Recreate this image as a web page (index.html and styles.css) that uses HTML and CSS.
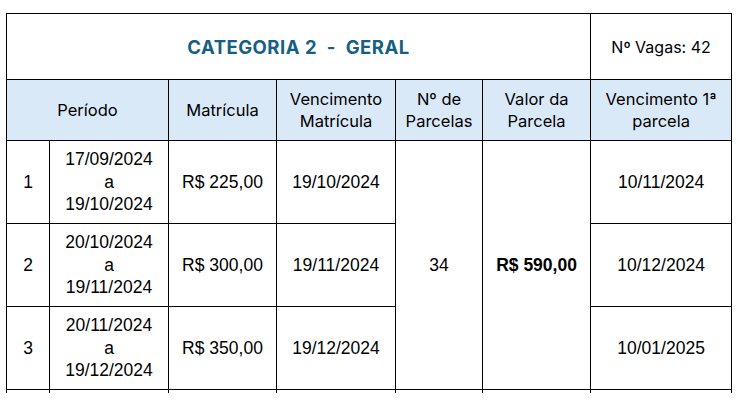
FILE: index.html
```html
<!DOCTYPE html>
<html lang="pt-BR">
<head>
<meta charset="utf-8">
<title>Categoria 2 - Geral</title>
<link rel="stylesheet" href="styles.css">
</head>
<body>
<div class="frame">
<table class="grid">
  <colgroup>
    <col class="c1"><col class="c2"><col class="c3"><col class="c4"><col class="c5"><col class="c6"><col class="c7">
  </colgroup>
  <tr class="r-title">
    <td colspan="6" class="title">CATEGORIA 2&nbsp; - &nbsp;GERAL</td>
    <td class="vagas">Nº Vagas: 42</td>
  </tr>
  <tr class="r-head">
    <th colspan="2">Período</th>
    <th>Matrícula</th>
    <th>Vencimento<br>Matrícula</th>
    <th>Nº de<br>Parcelas</th>
    <th>Valor da<br>Parcela</th>
    <th>Vencimento 1ª<br>parcela</th>
  </tr>
  <tr class="r-body">
    <td>1</td>
    <td>17/09/2024<br>a<br>19/10/2024</td>
    <td>R$ 225,00</td>
    <td>19/10/2024</td>
    <td rowspan="3">34</td>
    <td rowspan="3" class="strong">R$ 590,00</td>
    <td>10/11/2024</td>
  </tr>
  <tr class="r-body">
    <td>2</td>
    <td>20/10/2024<br>a<br>19/11/2024</td>
    <td>R$ 300,00</td>
    <td>19/11/2024</td>
    <td>10/12/2024</td>
  </tr>
  <tr class="r-body">
    <td>3</td>
    <td>20/11/2024<br>a<br>19/12/2024</td>
    <td>R$ 350,00</td>
    <td>19/12/2024</td>
    <td>10/01/2025</td>
  </tr>
  <tr class="r-next">
    <td></td><td></td><td></td><td></td><td></td><td></td><td></td>
  </tr>
</table>
</div>
</body>
</html>
```

FILE: styles.css
```css
html, body {
  margin: 0;
  padding: 0;
  background: #ffffff;
}
body {
  padding: 13px 0 0 6px;
}
.frame {
  height: 380px;
  overflow: hidden;
  width: 730px;
}
.grid {
  border-collapse: collapse;
  table-layout: fixed;
  width: 726px;
  color: #000;
  font-family: "Liberation Sans", Arial, sans-serif;
  font-size: 17.5px;
}
.c1 { width: 43px; }
.c2 { width: 119px; }
.c3 { width: 108px; }
.c4 { width: 119px; }
.c5 { width: 87px; }
.c6 { width: 108px; }
.c7 { width: 141px; }
.grid td, .grid th {
  border: 1px solid #000;
  padding: 0;
  text-align: center;
  vertical-align: middle;
}
.r-title { height: 66px; }
.r-head { height: 61px; }
.r-body { height: 83px; }
.r-next { height: 20px; }
.r-body td { line-height: 22.5px; }
.title {
  font-family: Inter, "Open Sans", sans-serif;
  font-weight: 700;
  font-size: 18.5px;
  letter-spacing: 0.5px;
  color: #156082;
  padding-top: 1px;
}
.vagas {
  font-family: Inter, "Open Sans", sans-serif;
  font-size: 16px;
}
.r-head th {
  background: #dae9f7;
  font-family: Inter, "Open Sans", sans-serif;
  font-weight: 400;
  font-size: 16.5px;
  line-height: 22px;
}
.strong { font-weight: 700; }
```
